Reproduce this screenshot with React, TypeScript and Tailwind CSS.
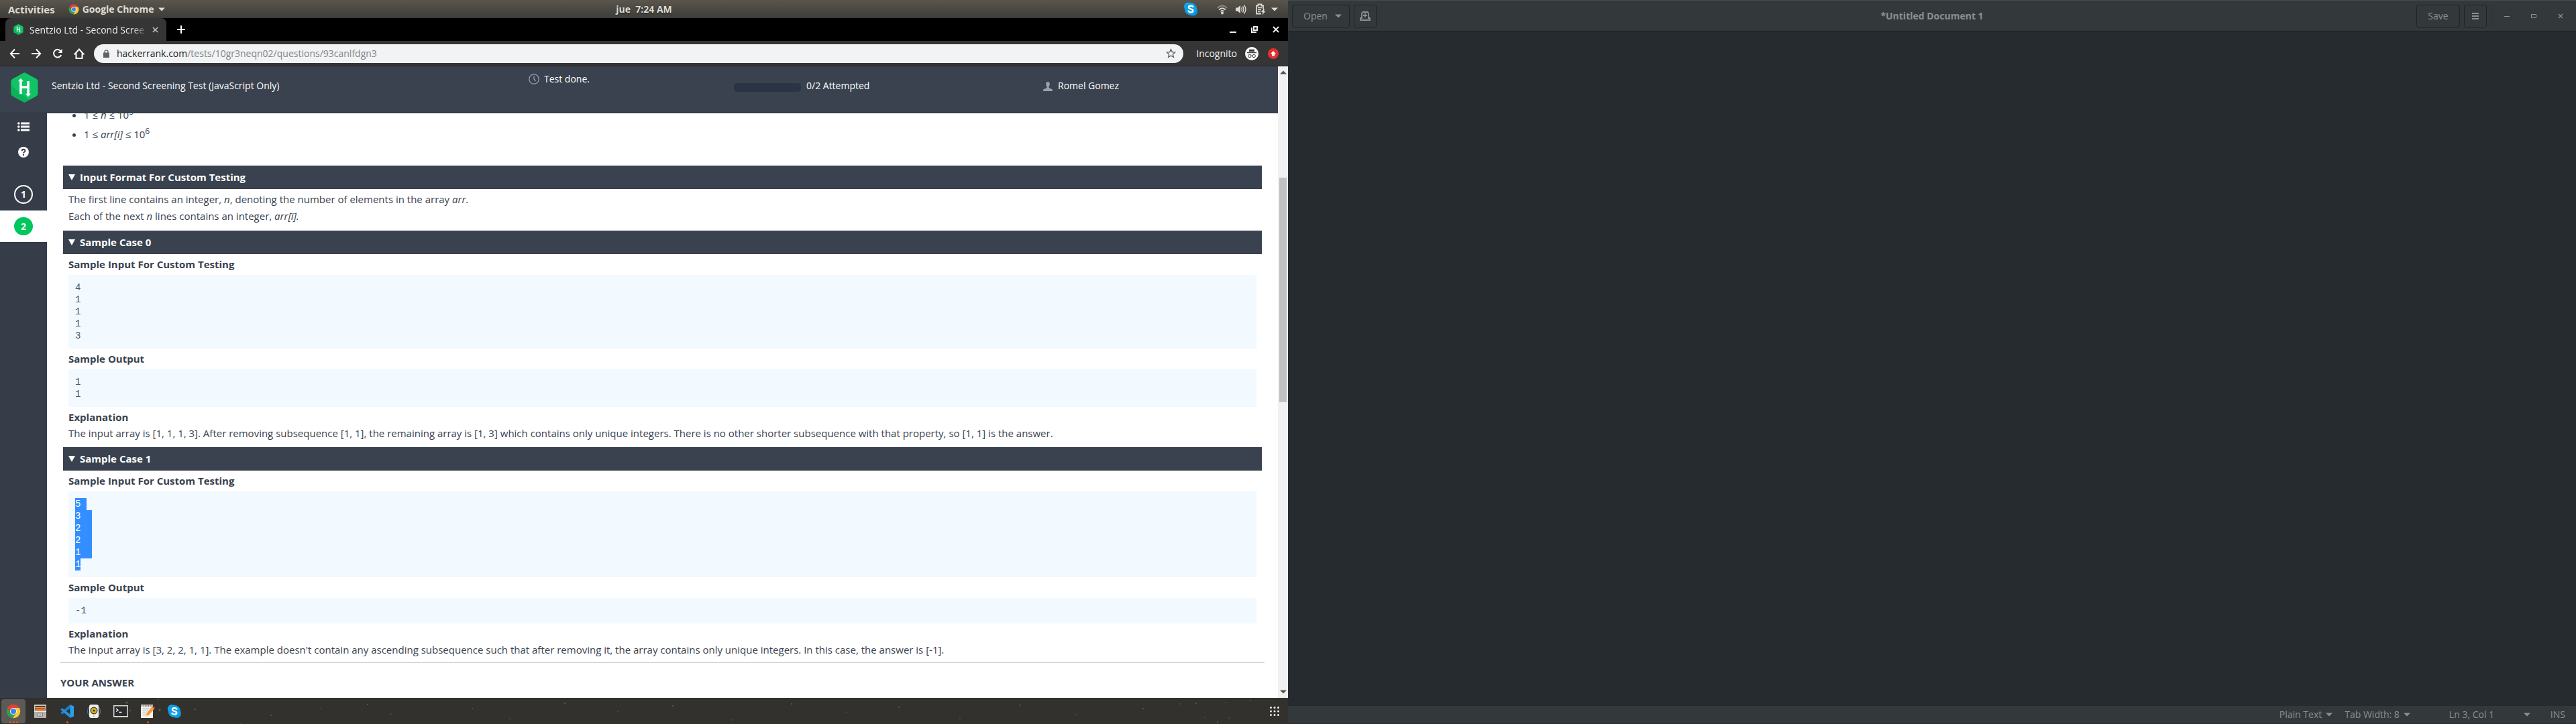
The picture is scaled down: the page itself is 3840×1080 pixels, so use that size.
import type { ReactNode } from "react";

/* ---------- Icons ---------- */

function ChromeLogo({ className }: { className: string }) {
  return (
    <svg viewBox="0 0 48 48" className={className} aria-hidden="true">
      <path d="M4.9 12.9 A22 22 0 0 0 22 46 L33.5 29.5 L24 24 L14.5 29.5 Z" fill="#2ea350" />
      <path d="M43.1 13 A22 22 0 0 1 22 46 L33.5 29.5 L34 20 L24 13 Z" fill="#fcc934" />
      <path d="M4.9 12.9 A22 22 0 0 1 43.1 13 L24 13 L14.5 29.5 Z" fill="#e04336" />
      <circle cx="24" cy="24" r="11" fill="#fff" />
      <circle cx="24" cy="24" r="8.8" fill="#3f7fee" />
    </svg>
  );
}

function HackerRankLogo({ className }: { className: string }) {
  return (
    <svg viewBox="0 0 41 46" className={className} aria-hidden="true">
      <path d="M18.5 .9 Q20.5 -.2 22.5 .9 L38.5 9.6 Q41 11.1 41 14 V32 Q41 34.9 38.5 36.4 L22.5 45.1 Q20.5 46.2 18.5 45.1 L2.5 36.4 Q0 34.9 0 32 V14 Q0 11.1 2.5 9.6 Z" fill="#0fc465" />
      <path d="M0 20 L28 42.1 L22.5 45.1 Q20.5 46.2 18.5 45.1 L2.5 36.4 Q0 34.9 0 32 Z" fill="#0aa653" opacity=".6" />
      <path d="M14.8 9 L18.8 13.6 H16.6 V20.6 H24.4 V13.2 H28 V32.4 H30.2 L26.2 37 L22.2 32.4 H24.4 V24.2 H16.6 V33 H13 V13.6 H10.8 Z" fill="#fff" />
    </svg>
  );
}

function SkypeLogo({ className }: { className: string }) {
  return (
    <svg viewBox="0 0 24 24" className={className} aria-hidden="true">
      <circle cx="8" cy="8" r="7" fill="#12a5e8" />
      <circle cx="16" cy="16" r="7" fill="#0b8fdd" />
      <circle cx="12" cy="12" r="10" fill="#0ea0e6" />
      <path d="M15.8 8.3 C14.6 6.3 8.6 6 8.6 9.3 C8.6 12.6 15.7 11 15.7 14.6 C15.7 18 9.3 17.8 8.1 15.3" fill="none" stroke="#fff" strokeWidth="2.5" strokeLinecap="round" />
    </svg>
  );
}

function Caret({ className = "" }: { className?: string }) {
  return (
    <svg viewBox="0 0 10 6" className={"h-[6px] w-[10px] shrink-0 " + className} aria-hidden="true">
      <path d="M0 .5 H10 L5 5.5 Z" fill="currentColor" />
    </svg>
  );
}

function TrayIcons() {
  return (
    <>
      <svg viewBox="0 0 16 16" className="ml-[28px] h-4 w-4" fill="none" aria-label="Wi-Fi">
        <path d="M1 6 Q8 -1 15 6" stroke="#8b8882" strokeWidth="1.8" />
        <path d="M3.3 8.5 Q8 4 12.7 8.5" stroke="#dfdbd2" strokeWidth="1.8" />
        <path d="M5.5 11 Q8 8.8 10.5 11" stroke="#dfdbd2" strokeWidth="1.5" />
        <circle cx="8" cy="13.6" r="2" fill="#dfdbd2" />
      </svg>
      <svg viewBox="0 0 16 16" className="ml-3 h-4 w-4" fill="none" stroke="#dfdbd2" aria-label="Volume">
        <path d="M0 5.5 H3 L7 2 V14 L3 10.5 H0 Z" fill="#dfdbd2" stroke="none" />
        <path d="M8.5 5.5 Q10.5 8 8.5 10.5 M10.5 3.5 Q13.5 8 10.5 12.5 M12.5 1.5 Q17.5 8 12.5 14.5" strokeWidth="1.4" />
      </svg>
      <svg viewBox="0 0 16 18" className="ml-[13px] h-[18px] w-4" fill="none" stroke="#dfdbd2" aria-label="Battery charging">
        <path d="M9 15.5 H2 V3.5 H4.5 V1.5 H9.5 V3.5 H12 V8" strokeWidth="1.8" />
        <path d="M4 6.5 H10 M4 9.5 H9 M4 12.5 H8" strokeWidth="1.6" />
        <path d="M12.5 8 L9 13 H11.5 L10.5 17.5 L15.5 11.5 H12.8 L14 8 Z" fill="#dfdbd2" stroke="none" />
      </svg>
      <Caret className="ml-[8px]" />
    </>
  );
}

/* ---------- Desktop bar ---------- */

function TopBar() {
  return (
    <header className="grid h-[27px] grid-cols-[1fr_auto_1fr] items-center bg-gradient-to-b from-[#5a564e] to-[#3d3c38] text-[14px] leading-5 font-bold text-[#dfdbd2] [text-shadow:0_1px_2px_#1c1b19]">
      <div className="flex items-center pl-3">
        <button type="button" className="mr-[20px] text-[15px]">Activities</button>
        <button type="button" className="flex items-center">
          <ChromeLogo className="mr-[5px] h-4 w-4" />
          Google Chrome
          <Caret className="ml-[7px]" />
        </button>
      </div>
      <time className="whitespace-pre">jue  7:24 AM</time>
      <div className="flex items-center justify-end pr-[15px]">
        <SkypeLogo className="h-[23px] w-[22px]" />
        <TrayIcons />
      </div>
    </header>
  );
}

/* ---------- Chrome window ---------- */

function TabStrip() {
  return (
    <div className="flex h-[34px] items-stretch bg-black pl-2 text-[14px] text-[#eceeef]">
      <div className="relative flex w-[240px] items-center rounded-t-[8px] bg-[#353535] pl-3">
        <HackerRankLogo className="h-4 w-[15px] shrink-0" />
        <span className="ml-[9px] w-[178px] overflow-hidden whitespace-nowrap [mask-image:linear-gradient(90deg,#000_85%,transparent)]">
          Sentzio Ltd - Second Scree
        </span>
        <button type="button" aria-label="Close tab" className="ml-[5px]">
          <svg viewBox="0 0 10 10" className="h-[9px] w-[9px]" stroke="#c9cbcc" strokeWidth="1.6">
            <path d="M1 1 L9 9 M9 1 L1 9" />
          </svg>
        </button>
      </div>
      <button type="button" aria-label="New tab" className="ml-4">
        <svg viewBox="0 0 12 12" className="h-3 w-3" stroke="#fff" strokeWidth="2">
          <path d="M6 0 V12 M0 6 H12" />
        </svg>
      </button>
      <div className="ml-auto flex items-center gap-[22px] pr-[13px]">
        <button type="button" aria-label="Minimize">
          <svg viewBox="0 0 10 10" className="h-[10px] w-[10px]"><path d="M0 8 H10 V10 H0 Z" fill="#eee" /></svg>
        </button>
        <button type="button" aria-label="Restore">
          <svg viewBox="0 0 10 10" className="h-[10px] w-[10px]" fill="none" stroke="#eee" strokeWidth="2">
            <path d="M4 1 H9 V6 H4 Z" />
            <path d="M1 2 V9 H8" />
          </svg>
        </button>
        <button type="button" aria-label="Close window">
          <svg viewBox="0 0 10 10" className="h-[10px] w-[10px]" stroke="#eee" strokeWidth="2"><path d="M1 1 L9 9 M9 1 L1 9" /></svg>
        </button>
      </div>
    </div>
  );
}

function NavButton({ label, children }: { label: string; children: ReactNode }) {
  return (
    <button type="button" aria-label={label} className="flex w-8 justify-center">
      <svg viewBox="0 0 16 16" className="h-4 w-4" fill="none" stroke="#fff" strokeWidth="2">
        {children}
      </svg>
    </button>
  );
}

function Toolbar() {
  return (
    <div className="flex h-[38px] items-center border-b border-[#222222] bg-[#353535] pl-[6px] text-[14px] text-[#eceeef]">
      <NavButton label="Back"><path d="M15 8 H2 M8 1.5 L1.8 8 L8 14.5" /></NavButton>
      <NavButton label="Forward"><path d="M1 8 H14 M8 1.5 L14.2 8 L8 14.5" /></NavButton>
      <NavButton label="Reload">
        <path d="M13.2 10 A5.8 5.8 0 1 1 12.6 4.3" />
        <path d="M14.6 1 V7 H8.6 Z" fill="#fff" stroke="none" />
      </NavButton>
      <NavButton label="Home"><path d="M8 1.5 L1.5 8.5 H3.5 V15 H12.5 V8.5 H14.5 Z" /></NavButton>
      <div className="ml-[6px] flex h-7 flex-1 items-center rounded-full bg-[#f1f3f4] pl-[14px] pr-[11px]">
        <svg viewBox="0 0 9 12" className="h-[12px] w-[9px]" aria-hidden="true">
          <path d="M0 4.5 H9 V12 H0 Z" fill="#5f6368" />
          <path d="M2 5 V3 A2.5 2.2 0 0 1 7 3 V5" fill="none" stroke="#5f6368" strokeWidth="1.3" />
        </svg>
        <div role="textbox" aria-label="Address" contentEditable suppressContentEditableWarning className="ml-[11px] flex-1 whitespace-nowrap text-[#80868b]">
          <span className="text-[#202124]">hackerrank.com</span>/tests/10gr3neqn02/questions/93canlfdgn3
        </div>
        <button type="button" aria-label="Bookmark this page">
          <svg viewBox="0 0 24 24" className="h-[15px] w-[15px]" fill="none" stroke="#5f6368" strokeWidth="2.2">
            <path d="M12 2.5 L14.8 9 L22 9.6 L16.5 14.3 L18.2 21.3 L12 17.5 L5.8 21.3 L7.5 14.3 L2 9.6 L9.2 9 Z" />
          </svg>
        </button>
      </div>
      <span className="ml-[19px]">Incognito</span>
      <svg viewBox="0 0 20 20" className="ml-3 h-5 w-5" aria-hidden="true">
        <circle cx="10" cy="10" r="10" fill="#fff" />
        <path d="M6.5 3.5 L8.3 3.8 H11.7 L13.5 3.5 L14.4 7 H5.6 Z M3 8 H17 V9.2 H3 Z" fill="#353535" />
        <g fill="none" stroke="#353535" strokeWidth="1"><circle cx="6.8" cy="13.5" r="2.2" /><circle cx="13.2" cy="13.5" r="2.2" /><path d="M9 13.2 H11" /></g>
      </svg>
      <button type="button" aria-label="Update available" className="ml-[14px] mr-[14px]">
        <svg viewBox="0 0 16 16" className="h-4 w-4">
          <circle cx="8" cy="8" r="8" fill="#e62e2e" />
          <path d="M8 4 L12 8.2 H10 V11.5 H6 V8.2 H4 Z" fill="#fff" />
        </svg>
      </button>
    </div>
  );
}

/* ---------- Test page ---------- */

function TestHeader() {
  return (
    <header className="flex h-[70px] shrink-0 border-b border-[#2a313d] bg-[#39424e] text-[14px] leading-5 text-white">
      <div className="w-[77px] shrink-0 pl-4 pt-[9px]">
        <HackerRankLogo className="h-[45px] w-[41px]" />
      </div>
      <div className="grid flex-1 grid-cols-[711fr_306fr_461fr_350fr] pt-[19px]">
        <h1>Sentzio Ltd - Second Screening Test (JavaScript Only)</h1>
        <div className="-mt-[10px] flex items-start">
          <svg viewBox="0 0 16 16" className="mr-[7px] mt-[2px] h-4 w-4" fill="none" stroke="#98a0b4" strokeWidth="1.3" aria-hidden="true">
            <circle cx="8" cy="8" r="7.2" />
            <path d="M8 3.5 V8 L10.5 11" />
          </svg>
          Test done.
        </div>
        <div className="flex items-start">
          <div role="progressbar" aria-label="Questions attempted" aria-valuenow={0} aria-valuemax={2} className="mr-2 mt-[6px] h-[13px] w-[100px] rounded-[5px] bg-[#2a3444]" />
          0/2 Attempted
        </div>
        <div className="flex items-start">
          <svg viewBox="0 0 14 14" className="mr-2 mt-[4px] h-[14px] w-[14px]" fill="#98a0b4" aria-hidden="true">
            <path d="M7 0 C9 0 10 1.5 9.8 3.8 C9.7 5.8 8.8 6.5 8.6 7.5 V9 C9.5 10 14 10.2 14 13 V14 H0 V13 C0 10.2 4.5 10 5.4 9 V7.5 C5.2 6.5 4.3 5.8 4.2 3.8 C4 1.5 5 0 7 0 Z" />
          </svg>
          Romel Gomez
        </div>
      </div>
    </header>
  );
}

function SideNav() {
  return (
    <nav className="flex w-[70px] shrink-0 flex-col items-center bg-[#363c48] text-[14px] leading-5 font-bold text-white">
      <button type="button" aria-label="All questions" className="mt-[13px]">
        <svg viewBox="0 0 18 14" className="h-[14px] w-[18px]" fill="#fff">
          <path d="M5 .5 H18 V3.5 H5 Z M5 5.5 H18 V8.5 H5 Z M5 10.5 H18 V13.5 H5 Z" />
          <circle cx="1.8" cy="2" r="1.8" /><circle cx="1.8" cy="7" r="1.8" /><circle cx="1.8" cy="12" r="1.8" />
        </svg>
      </button>
      <button type="button" aria-label="Help" className="mt-[23px]">
        <svg viewBox="0 0 16 16" className="h-4 w-4">
          <circle cx="8" cy="8" r="8" fill="#fff" />
          <path d="M5.6 6.2 C5.6 2.8 10.4 3 10.4 6 C10.4 7.8 8 7.8 8 9.6" fill="none" stroke="#363c48" strokeWidth="1.9" />
          <circle cx="8" cy="12" r="1.2" fill="#363c48" />
        </svg>
      </button>
      <button type="button" className="mt-[41px] h-7 w-7 rounded-full border-2 border-white">1</button>
      <div className="mt-[10px] flex w-full justify-center bg-white py-[10px]">
        <button type="button" className="h-[27px] w-7 rounded-full bg-[#00c65e]">2</button>
      </div>
    </nav>
  );
}

function Section({ title, children }: { title: string; children: ReactNode }) {
  return (
    <details open>
      <summary className="flex h-[35px] list-none items-center bg-[#39424e] pl-2 font-bold text-white">
        <svg viewBox="0 0 10 9" className="mr-[7px] h-[9px] w-[10px]" fill="#fff" aria-hidden="true"><path d="M0 0 H10 L5 9 Z" /></svg>
        {title}
      </summary>
      <div className="px-2">{children}</div>
    </details>
  );
}

function Label({ children }: { children: ReactNode }) {
  return <h3 className="leading-[31px] font-bold">{children}</h3>;
}

function Code({ lines, selected = false }: { lines: string[]; selected?: boolean }) {
  return (
    <pre className="rounded-[2px] bg-[#f2f9ff] p-[10px] font-['Liberation_Mono',monospace] text-[14px] leading-[18px] text-[#4c5663]">
      {lines.map((line, i) => (
        <span key={i} className={selected ? "block w-fit bg-[#338fff] text-white" : "block w-fit"}>{line}</span>
      ))}
    </pre>
  );
}

function Explanation({ children }: { children: ReactNode }) {
  return (
    <div className="pt-[3px] leading-6">
      <h3 className="font-bold">Explanation</h3>
      <p>{children}</p>
    </div>
  );
}

function Question() {
  return (
    <main className="min-w-0 flex-1 overflow-hidden bg-white pl-5 pr-5 text-[15px] text-[#39424e]">
      <div className="px-1">
        <ul className="-mt-[12px] mb-8 list-disc pl-[31px] leading-[29px] [&_sup]:text-[12px] [&_sup]:leading-none">
          <li>1 ≤ <i>n</i> ≤ 10<sup>5</sup></li>
          <li>1 ≤ <i>arr[i]</i> ≤ 10<sup>6</sup></li>
        </ul>
        <Section title="Input Format For Custom Testing">
          <div className="pt-[3px] pb-[9px] leading-[25px]">
            <p>The first line contains an integer, <i>n</i>, denoting the number of elements in the array <i>arr</i>.</p>
            <p>Each of the next <i>n</i> lines contains an integer, <i>arr[i].</i></p>
          </div>
        </Section>
        <Section title="Sample Case 0">
          <Label>Sample Input For Custom Testing</Label>
          <Code lines={["4", "1", "1", "1", "3"]} />
          <Label>Sample Output</Label>
          <Code lines={["1", "1"]} />
          <Explanation>
            The input array is [1, 1, 1, 3]. After removing subsequence [1, 1], the remaining array is [1, 3] which contains only unique integers. There is no other shorter subsequence with that property, so [1, 1] is the answer.
          </Explanation>
        </Section>
        <div className="mt-[9px]">
          <Section title="Sample Case 1">
            <Label>Sample Input For Custom Testing</Label>
            <Code selected lines={["5 ", "3  ", "2  ", "2  ", "1  ", "1"]} />
            <Label>Sample Output</Label>
            <Code lines={["-1"]} />
            <Explanation>
              The input array is [3, 2, 2, 1, 1]. The example doesn't contain any ascending subsequence such that after removing it, the array contains only unique integers. In this case, the answer is [-1].
            </Explanation>
          </Section>
        </div>
      </div>
      <hr className="mt-[7px] border-[#cccccc]" />
      <h2 className="mt-[19px] leading-5 font-bold">YOUR ANSWER</h2>
    </main>
  );
}

function Scrollbar() {
  return (
    <div className="flex w-[15px] shrink-0 flex-col items-center bg-[#f1f1f1] py-[6px] text-[#505050]">
      <Caret className="h-[5px] w-[8px] rotate-180" />
      <div className="grow-[38]" />
      <div className="w-[11px] grow-[83] bg-[#c1c1c1]" />
      <div className="grow-[106]" />
      <Caret className="h-[5px] w-[8px]" />
    </div>
  );
}

/* ---------- Dock ---------- */

function DockItem({ label, dots = 0, active = false, children }: { label: string; dots?: number; active?: boolean; children: ReactNode }) {
  return (
    <button
      type="button"
      aria-label={label}
      className={(active ? "bg-[#5c5a56] " : "") + "relative flex h-[36px] w-[36px] items-center justify-center rounded-[4px]"}
    >
      {children}
      <span className="absolute inset-x-0 bottom-0 flex justify-center gap-[2px]">
        {Array.from({ length: dots }, (_, i) => (
          <span key={i} className="h-[3px] w-[3px] rounded-full bg-[#e95420]" />
        ))}
      </span>
    </button>
  );
}

const SPECKS = [
  [189, 7], [194, 19], [238, 18], [291, 17], [236, 2], [359, 39], [404, 26], [478, 16], [548, 10], [583, 24],
  [704, 16], [760, 31], [842, 8], [921, 20], [1003, 12], [1090, 33], [1180, 9], [1262, 22], [1340, 14],
  [1431, 30], [1520, 11], [1604, 25], [1704, 16], [1759, 9], [1783, 8], [1827, 7], [1864, 4], [1796, 29], [1815, 36], [1832, 30],
];

function Dock() {
  return (
    <footer className="relative flex h-[39px] shrink-0 items-center gap-1 bg-[#33312d] pl-[2px]">
      <svg className="absolute inset-0 h-full w-full" aria-hidden="true">
        {SPECKS.map(([x, y], i) => (
          <circle key={i} cx={x} cy={y} r={i < 4 ? 1.6 : 1} fill="#6b6a66" opacity={i % 2 ? 0.5 : 0.8} />
        ))}
      </svg>
      <DockItem label="Google Chrome" dots={3} active><ChromeLogo className="h-[22px] w-[22px]" /></DockItem>
      <DockItem label="Files">
        <svg viewBox="0 0 20 20" className="h-5 w-5">
          <path d="M1 0 H19 V20 H1 Z" fill="#c9c7c4" />
          <path d="M2.5 2 H17.5 V9 H2.5 Z" fill="#5b3a22" />
          <path d="M3 4 H17 V5.5 H3 Z" fill="#f5a35a" /><path d="M3 6.5 H17 V9.5 H3 Z" fill="#f07b2e" />
          <path d="M1 10 H19 V20 H1 Z" fill="#b5b3b0" /><path d="M1 10 H19 V11 H1 Z" fill="#eee" />
          <path d="M6.5 13 H13.5 V17 H6.5 Z" fill="#eee" stroke="#777" /><path d="M8.5 15 H11.5" stroke="#666" />
        </svg>
      </DockItem>
      <DockItem label="Visual Studio Code" dots={1}>
        <svg viewBox="0 0 20 20" className="h-5 w-5">
          <path d="M14.5 0 L20 2.5 V17.5 L14.5 20 Z" fill="#2aa0ea" />
          <path d="M14.5 0 V5.5 L3 14.5 L.5 13 V12 Z" fill="#1b80c8" />
          <path d="M14.5 20 V14.5 L3 5.5 L.5 7 V8 Z" fill="#2191dc" />
        </svg>
      </DockItem>
      <DockItem label="Rhythmbox">
        <svg viewBox="0 0 20 20" className="h-5 w-5">
          <path d="M2.5 4 Q-1.5 10 2.5 16 M17.5 4 Q21.5 10 17.5 16" fill="none" stroke="#466a96" strokeWidth="1.3" />
          <rect x="3" y="0" width="14" height="20" rx="3" fill="#f1f0ee" />
          <circle cx="10" cy="9" r="5.5" fill="#4a4a46" /><circle cx="10" cy="9" r="4" fill="#d8b713" /><circle cx="10" cy="9" r="1.6" fill="#3b3a35" />
          <circle cx="10" cy="17.3" r="1" fill="#aaa" />
        </svg>
      </DockItem>
      <DockItem label="Terminal">
        <svg viewBox="0 0 22 18" className="h-[18px] w-[22px]">
          <path d="M0 0 H22 V18 H0 Z" fill="#d5d4d1" /><path d="M1.5 1.5 H20.5 V16 H1.5 Z" fill="#2a2c2d" />
          <path d="M4 5 L7 7.3 L4 9.6 M8.5 10.5 H12.5" fill="none" stroke="#fff" strokeWidth="1.3" />
        </svg>
      </DockItem>
      <DockItem label="Text Editor" dots={1}>
        <svg viewBox="0 0 22 21" className="h-[21px] w-[22px]">
          <path d="M1 2 H19 V21 H1 Z" fill="#f3f2ef" /><path d="M1 1 H19 V4 H1 Z" fill="#cfcdc9" />
          <path d="M2.5 0 V4 M5 0 V4 M7.5 0 V4 M10 0 V4 M12.5 0 V4 M15 0 V4 M17.5 0 V4" stroke="#77736d" strokeWidth=".9" />
          <path d="M3.5 7.5 H14 M3.5 10.5 H12 M3.5 13.5 H9 M3.5 16.5 H8" stroke="#aaa7a2" />
          <path d="M17.5 4.5 L21 7.5 L12 17.5 L8 19 L8.8 15 Z" fill="#f39a2d" /><path d="M17.5 4.5 L19 3 L22 6 L21 7.5 Z" fill="#e2474b" />
          <path d="M8.8 15 L12 17.5 L8 19 Z" fill="#f5d7ae" />
        </svg>
      </DockItem>
      <DockItem label="Skype"><SkypeLogo className="h-[22px] w-[22px]" /></DockItem>
      <button type="button" aria-label="Show applications" className="ml-auto mr-[13px]">
        <svg viewBox="0 0 14 14" className="h-[14px] w-[14px]" fill="#eeeeec">
          {[1.5, 7, 12.5].map((y) => [1.5, 7, 12.5].map((x) => <circle key={x + "-" + y} cx={x} cy={y} r="1.5" />))}
        </svg>
      </button>
    </footer>
  );
}

/* ---------- Text editor window ---------- */

function EditorWindow() {
  return (
    <section aria-label="Text editor" className="flex min-w-0 flex-1 flex-col bg-[#252b2e] text-[14px] leading-5 text-[#8c9091]">
      <header className="grid h-[47px] shrink-0 grid-cols-[1fr_auto_1fr] items-center border-t border-b border-t-[#454b4d] border-b-[#1d2123] bg-[#33393b]">
        <div className="flex gap-[6px] pl-[6px]">
          <button type="button" className="flex h-[34px] w-[86px] items-center rounded-[3px] border border-[#1f2426] pl-4">
            Open
            <Caret className="ml-[11px]" />
          </button>
          <button type="button" aria-label="New document" className="flex h-[34px] w-[34px] items-center justify-center rounded-[3px] border border-[#1f2426]">
            <svg viewBox="0 0 16 14" className="h-[14px] w-4" fill="none" stroke="currentColor" strokeWidth="1.8">
              <path d="M3 10 V2.5 L4.5 1 H11.5 L13 2.5 V10 M8 3 V9 M5 6 H11" />
              <path d="M4 10 H1 V13 H15 V10 H12" />
            </svg>
          </button>
        </div>
        <h2 className="font-bold">*Untitled Document 1</h2>
        <div className="flex items-center justify-end">
          <button type="button" className="h-[34px] w-[65px] rounded-[3px] border border-[#1f2426]">Save</button>
          <button type="button" aria-label="Menu" className="ml-[6px] flex h-[34px] w-[34px] items-center justify-center rounded-[3px] border border-[#1f2426]">
            <svg viewBox="0 0 10 10" className="h-[10px] w-[10px]" fill="currentColor"><path d="M0 0 H10 V2 H0 Z M0 4 H10 V6 H0 Z M0 8 H10 V10 H0 Z" /></svg>
          </button>
          <div className="ml-[6px] h-[34px] w-px bg-[#2b3032]" />
          <button type="button" aria-label="Minimize editor" className="ml-[19px]">
            <svg viewBox="0 0 8 8" className="h-2 w-2" fill="currentColor"><path d="M0 4 H8 V5 H0 Z" /></svg>
          </button>
          <button type="button" aria-label="Maximize editor" className="ml-8">
            <svg viewBox="0 0 8 8" className="h-2 w-2" fill="none" stroke="currentColor"><path d="M.5 1.5 H7.5 V6.5 H.5 Z" /></svg>
          </button>
          <button type="button" aria-label="Close editor" className="ml-8 mr-[19px]">
            <svg viewBox="0 0 8 8" className="h-2 w-2" stroke="currentColor" strokeWidth="1.4"><path d="M1 1 L7 7 M7 1 L1 7" /></svg>
          </button>
        </div>
      </header>
      <textarea aria-label="Document text" className="w-full flex-1 resize-none bg-transparent outline-none" />
      <footer className="flex h-[27px] shrink-0 items-center justify-end border-b border-[#282d2f] bg-[#33393b] pr-[16px]">
        <button type="button" className="flex items-center">Plain Text<Caret className="ml-[6px]" /></button>
        <button type="button" className="ml-[18px] flex items-center">Tab Width: 8<Caret className="ml-[6px]" /></button>
        <button type="button" className="ml-[58px] flex w-[121px] items-center justify-between">Ln 3, Col 1<Caret /></button>
        <span className="ml-[30px]">INS</span>
      </footer>
    </section>
  );
}

export default function App() {
  return (
    <div className="flex h-screen overflow-hidden font-['Open_Sans','Noto_Sans',sans-serif]">
      <div className="flex min-w-0 flex-1 flex-col">
        <TopBar />
        <TabStrip />
        <Toolbar />
        <div className="flex min-h-0 flex-1">
          <div className="flex min-w-0 flex-1 flex-col">
            <TestHeader />
            <div className="flex min-h-0 flex-1">
              <SideNav />
              <Question />
            </div>
          </div>
          <Scrollbar />
        </div>
        <Dock />
      </div>
      <EditorWindow />
    </div>
  );
}
